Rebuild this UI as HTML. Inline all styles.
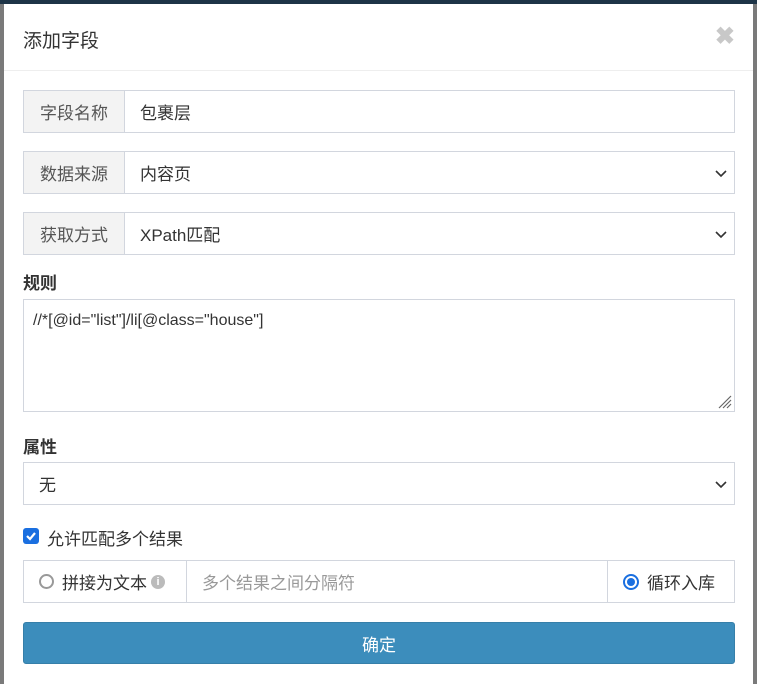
<!DOCTYPE html><html><head><meta charset="utf-8"><style>
*{box-sizing:border-box}
body{margin:0;width:757px;height:675px;background:#7a7a7a;font-family:"Liberation Sans","Noto Sans CJK SC",sans-serif;position:relative;overflow:hidden;color:#333}
.top{position:absolute;left:0;top:0;width:757px;height:4px;background:#1d3447}
.m{position:absolute;left:4px;top:4px;width:749px;height:680px;background:#fff}
.t{position:absolute;left:19px;top:22px;font-size:19px;color:#333}
.x{position:absolute;right:18px;top:18px;font-size:24px;color:#c8c8c8;font-weight:bold}
.hl{position:absolute;left:0;top:66px;width:749px;height:1px;background:#eee}
.row{position:absolute;left:19px;width:712px;height:43px;border:1px solid #d2d6de;font-size:17px;display:flex;align-items:center}
.ad{width:101px;height:100%;background:#f3f3f3;border-right:1px solid #d2d6de;display:flex;align-items:center;justify-content:center;color:#555}
.v{padding-left:15px;flex:1}
.ch{position:absolute;right:6px;top:14px}
.lb{position:absolute;left:19px;font-size:17px;font-weight:bold;color:#333}
</style></head><body>
<div class="top"></div>
<div class="m">
<div class="t">添加字段</div><div class="x">✖</div><div class="hl"></div>
<div class="row" style="top:86px"><div class="ad">字段名称</div><div class="v">包裹层</div></div>
<div class="row" style="top:147px"><div class="ad">数据来源</div><div class="v">内容页</div><svg class="ch" width="14" height="14"><path d="M2 5l5 5 5-5" stroke="#333" stroke-width="1.6" fill="none"/></svg></div>
<div class="row" style="top:208px"><div class="ad">获取方式</div><div class="v">XPath匹配</div><svg class="ch" width="14" height="14"><path d="M2 5l5 5 5-5" stroke="#333" stroke-width="1.6" fill="none"/></svg></div>
<div class="lb" style="top:265px">规则</div>
<div class="row" style="top:295px;height:113px;align-items:flex-start;padding:12px 0 0 9px;font-size:16px">//*[@id="list"]/li[@class="house"]
<svg style="position:absolute;right:2px;bottom:2px" width="16" height="16"><path d="M15 3L3 15M15 7L7 15M15 11L11 15" stroke="#666" stroke-width="1.2"/></svg></div>
<div class="lb" style="top:429px">属性</div>
<div class="row" style="top:458px;padding-left:15px">无<svg class="ch" width="14" height="14"><path d="M2 5l5 5 5-5" stroke="#333" stroke-width="1.6" fill="none"/></svg></div>
<div style="position:absolute;left:19px;top:524px;width:16px;height:16px;background:#1a6fe0;border-radius:3px"><svg width="16" height="16"><path d="M4 8l3 3 5-6" stroke="#fff" stroke-width="2.2" fill="none"/></svg></div>
<div style="position:absolute;left:43px;top:521px;font-size:17px">允许匹配多个结果</div>
<div class="row" style="top:556px">
<div style="width:163px;height:100%;border-right:1px solid #d2d6de;display:flex;align-items:center;padding-left:15px"><span style="width:15px;height:15px;border:2px solid #999;border-radius:50%;margin-right:8px"></span>拼接为文本<span style="width:14px;height:14px;border-radius:50%;background:#bbb;color:#fff;font-size:11px;margin-left:4px;text-align:center;line-height:14px;font-weight:bold">i</span></div>
<div style="flex:1;padding-left:15px;color:#999">多个结果之间分隔符</div>
<div style="width:127px;height:100%;border-left:1px solid #d2d6de;display:flex;align-items:center;padding-left:15px"><span style="width:16px;height:16px;border:2px solid #1a6fe0;border-radius:50%;margin-right:8px;display:flex;align-items:center;justify-content:center"><span style="width:8px;height:8px;border-radius:50%;background:#1a6fe0"></span></span>循环入库</div>
</div>
<div style="position:absolute;left:19px;top:618px;width:712px;height:42px;background:#3c8dbc;border:1px solid #367fa9;border-radius:3px;color:#fff;font-size:17px;display:flex;align-items:center;justify-content:center">确定</div>
</div>
</body></html>
